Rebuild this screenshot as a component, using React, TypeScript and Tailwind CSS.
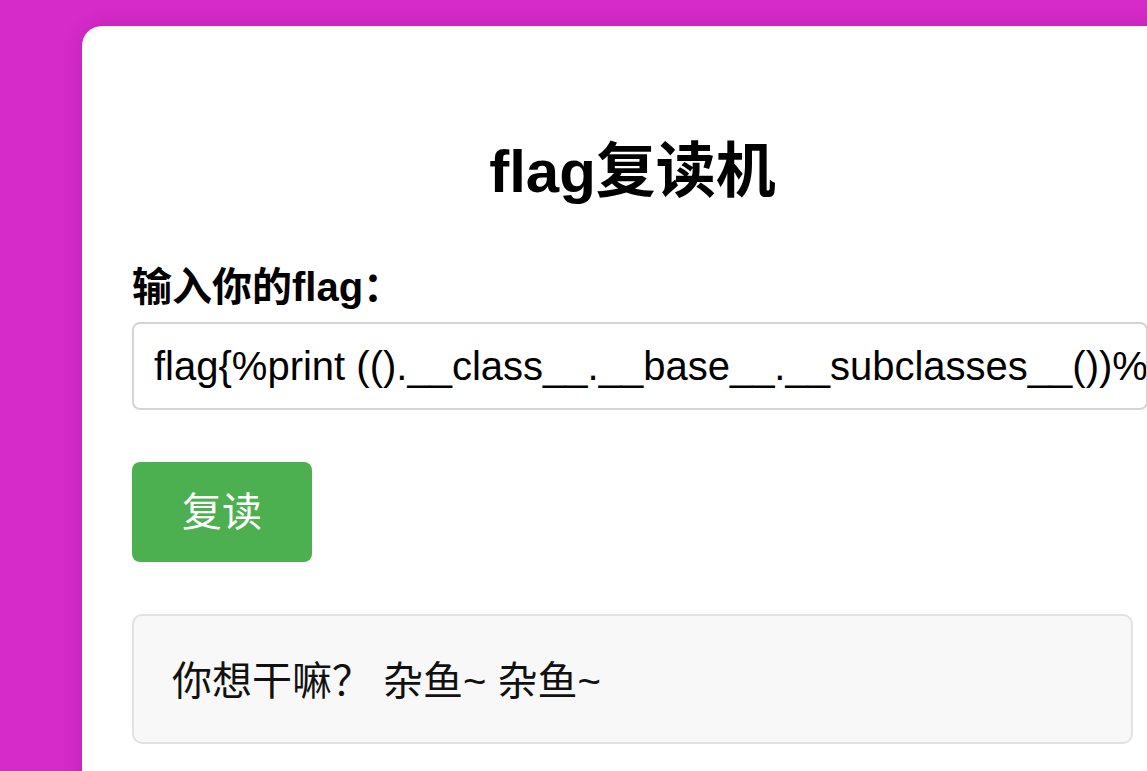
import React from "react";

export default function App() {
  const font = { fontFamily: '"Liberation Sans", Arial, "Noto Sans CJK SC", sans-serif' };
  return (
    <div className="w-[1147px] h-[771px] overflow-hidden bg-[#d62ac9] pt-[26px] pl-[82px]" style={font}>
      <div className="w-[1100px] h-[800px] bg-white rounded-[20px] shadow-[0_0_20px_rgba(0,0,0,0.12)] pt-[106px] px-[50px]">
        <h1 className="h-[80px] leading-[80px] text-[60px] font-bold text-center text-black w-[1001px]">flag复读机</h1>
        <label className="block mt-[50px] h-[50px] leading-[50px] text-[40px] font-bold text-black">输入你的flag：</label>
        <input
          readOnly
          value="flag{%print (().__class__.__base__.__subclasses__())%}"
          className="block mt-[10px] w-[1016px] h-[88px] pl-[20px] pr-0 text-[40px] text-black border-2 border-[#d4d4d4] rounded-[8px] outline-none"
          style={font}
        />
        <button className="block mt-[52px] w-[180px] h-[100px] bg-[#4caf50] text-white text-[40px] rounded-[8px]" style={font}>
          复读
        </button>
        <div className="mt-[52px] w-[1001px] h-[130px] bg-[#f8f8f8] border-2 border-[#e2e2e2] rounded-[10px] pl-[38px] pt-[4px] flex items-center text-[40px] text-[#111]">
          你想干嘛？ 杂鱼~ 杂鱼~
        </div>
      </div>
    </div>
  );
}
